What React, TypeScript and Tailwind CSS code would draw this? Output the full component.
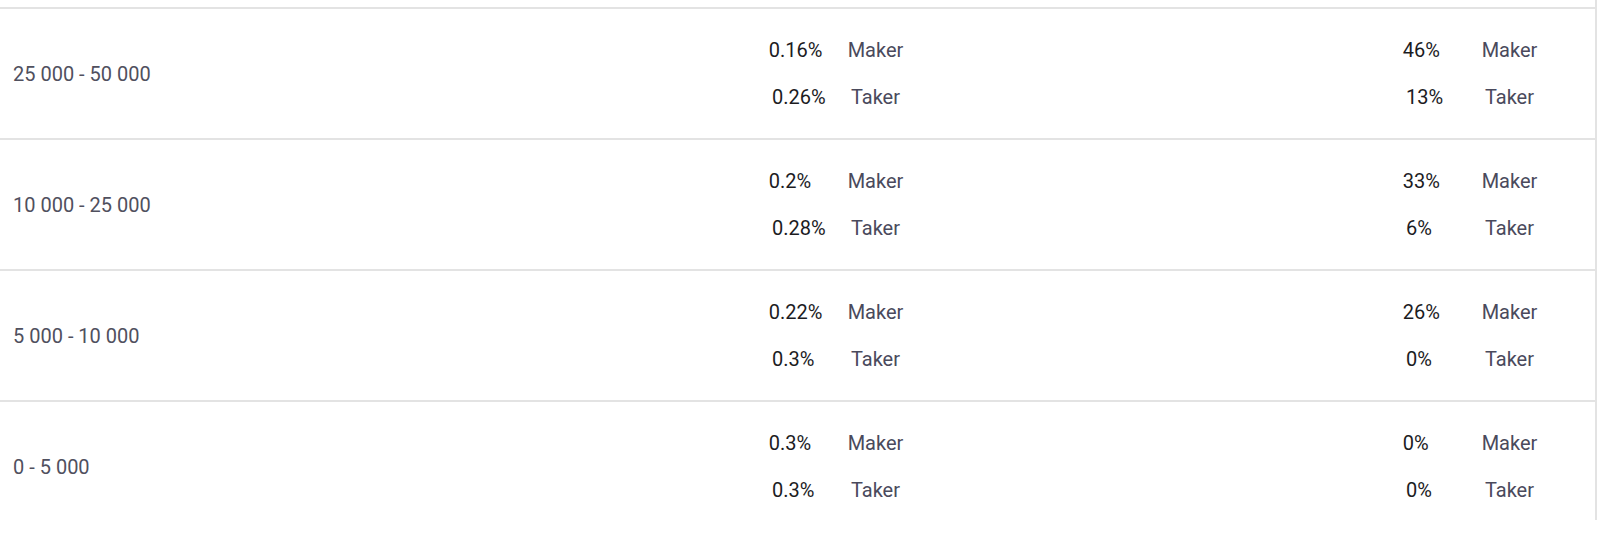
import React from 'react';

type FeeRow = {
  range: string;
  fee: { maker: string; taker: string };
  share: { maker: string; taker: string };
};

const ROWS: FeeRow[] = [
  { range: '25 000 - 50 000', fee: { maker: '0.16%', taker: '0.26%' }, share: { maker: '46%', taker: '13%' } },
  { range: '10 000 - 25 000', fee: { maker: '0.2%', taker: '0.28%' }, share: { maker: '33%', taker: '6%' } },
  { range: '5 000 - 10 000', fee: { maker: '0.22%', taker: '0.3%' }, share: { maker: '26%', taker: '0%' } },
  { range: '0 - 5 000', fee: { maker: '0.3%', taker: '0.3%' }, share: { maker: '0%', taker: '0%' } },
];

function Pair({ maker, taker }: { maker: string; taker: string }) {
  return (
    <div className="w-[140px] flex flex-col items-center">
      {[
        { v: maker, l: 'Maker' },
        { v: taker, l: 'Taker' },
      ].map(x => (
        <div key={x.l} className="h-[47px] flex items-center">
          <span className="w-[79px] text-[#1c1c1f]">{x.v}</span>
          <span className="text-[#4a4a5c]">{x.l}</span>
        </div>
      ))}
    </div>
  );
}

export default function App() {
  return (
    <div className="w-[1600px] h-[543px] bg-white" style={{ fontFamily: 'Roboto, "Liberation Sans", sans-serif' }}>
      <div className="w-[1597px] h-[520px] overflow-hidden border-r-2 border-[#e3e3e3] text-[20px]">
        <div className="h-[7px]" />
        {ROWS.map(r => (
          <div key={r.range} className="h-[131px] flex items-center border-t-2 border-[#e3e3e3]">
            <div className="w-[766px] pl-[13px] text-[#50505e]">{r.range}</div>
            <Pair {...r.fee} />
            <div className="flex-1" />
            <Pair {...r.share} />
            <div className="w-[55px]" />
          </div>
        ))}
      </div>
    </div>
  );
}
